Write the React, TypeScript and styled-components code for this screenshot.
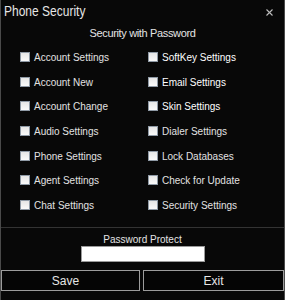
import React from "react";
import styled, { createGlobalStyle } from "styled-components";

const Global = createGlobalStyle`
  html, body { margin: 0; padding: 0; background: #000; }
  body { font-family: "Liberation Sans", Arial, sans-serif; }
  * { box-sizing: border-box; }
`;

const Window = styled.div`
  width: 285px;
  height: 300px;
  background: #080808;
  border-left: 1px solid #4a4a4a;
  border-right: 1px solid #4a4a4a;
  display: flex;
  flex-direction: column;
  color: #dedede;
`;

const TitleBar = styled.div`
  height: 24px;
  display: flex;
  align-items: flex-start;
  justify-content: space-between;
  padding: 1px 11px 0 3px;
`;

const Title = styled.span`
  font-size: 15px;
  line-height: 20px;
  color: #e6e6e6;
  display: inline-block;
  transform: scaleX(0.8);
  transform-origin: left center;
  white-space: nowrap;
`;

const CloseBtn = styled.span`
  display: flex;
  margin-top: 8px;
  width: 7px;
  height: 7px;
`;

const Heading = styled.div`
  height: 22px;
  padding-top: 3px;
  text-align: center;
  font-size: 11px;
  line-height: 13px;
  letter-spacing: -0.35px;
  color: #e4e4e4;
`;

const OptionGrid = styled.div`
  height: 182px;
  display: grid;
  grid-template-columns: 128px 1fr;
  grid-auto-flow: column;
  grid-template-rows: repeat(7, 24.6px);
  padding-left: 19px;
  border-bottom: 1px solid #333;
`;

const Option = styled.label<{ $bright?: boolean }>`
  display: flex;
  align-items: center;
  gap: 4px;
  font-size: 10px;
  line-height: 12px;
  color: ${(p) => (p.$bright ? "#ffffff" : "#e2e2e2")};
  white-space: nowrap;
`;

const Box = styled.span`
  width: 10px;
  height: 10px;
  margin-top: -2px;
  background: linear-gradient(#e6e6e6, #fafafa);
  border: 1px solid #8f9aa6;
  flex: none;
`;

const PasswordSection = styled.div`
  height: 42px;
  display: flex;
  flex-direction: column;
  align-items: center;
  padding-top: 6px;
`;

const PasswordLabel = styled.div`
  font-size: 10px;
  line-height: 11px;
  color: #e4e4e4;
`;

const PasswordInput = styled.div`
  width: 124px;
  height: 16px;
  margin-top: 1px;
  margin-left: 1px;
  background: #fff;
  border: 1px solid #9a9a9a;
`;

const ButtonRow = styled.div`
  display: flex;
  gap: 3px;
  height: 21px;
`;

const Button = styled.div<{ $w: number; $shift?: number }>`
  width: ${(p) => p.$w}px;
  height: 21px;
  border: 1px solid #9c9c9c;
  background: #050505;
  display: flex;
  align-items: center;
  justify-content: center;
  padding-right: ${(p) => p.$shift ?? 0}px;
  font-size: 12px;
  line-height: 14px;
  color: #e6e6e6;
`;

const left = [
  "Account Settings",
  "Account New",
  "Account Change",
  "Audio Settings",
  "Phone Settings",
  "Agent Settings",
  "Chat Settings",
];
const right: [string, boolean][] = [
  ["SoftKey Settings", true],
  ["Email Settings", true],
  ["Skin Settings", true],
  ["Dialer Settings", false],
  ["Lock Databases", false],
  ["Check for Update", false],
  ["Security Settings", false],
];

export default function App() {
  return (
    <>
      <Global />
      <Window>
        <TitleBar>
          <Title>Phone Security</Title>
          <CloseBtn>
            <svg width="7" height="7" viewBox="0 0 7 7">
              <path d="M0.5 0.5 L6.5 6.5 M6.5 0.5 L0.5 6.5" stroke="#bdbdbd" strokeWidth="1.1" />
            </svg>
          </CloseBtn>
        </TitleBar>
        <Heading>Security with Password</Heading>
        <OptionGrid>
          {left.map((t) => (
            <Option key={t}>
              <Box />
              {t}
            </Option>
          ))}
          {right.map(([t, b]) => (
            <Option key={t} $bright={b}>
              <Box />
              {t}
            </Option>
          ))}
        </OptionGrid>
        <PasswordSection>
          <PasswordLabel>Password Protect</PasswordLabel>
          <PasswordInput />
        </PasswordSection>
        <ButtonRow>
          <Button $w={139} $shift={10}>Save</Button>
          <Button $w={141}>Exit</Button>
        </ButtonRow>
      </Window>
    </>
  );
}
